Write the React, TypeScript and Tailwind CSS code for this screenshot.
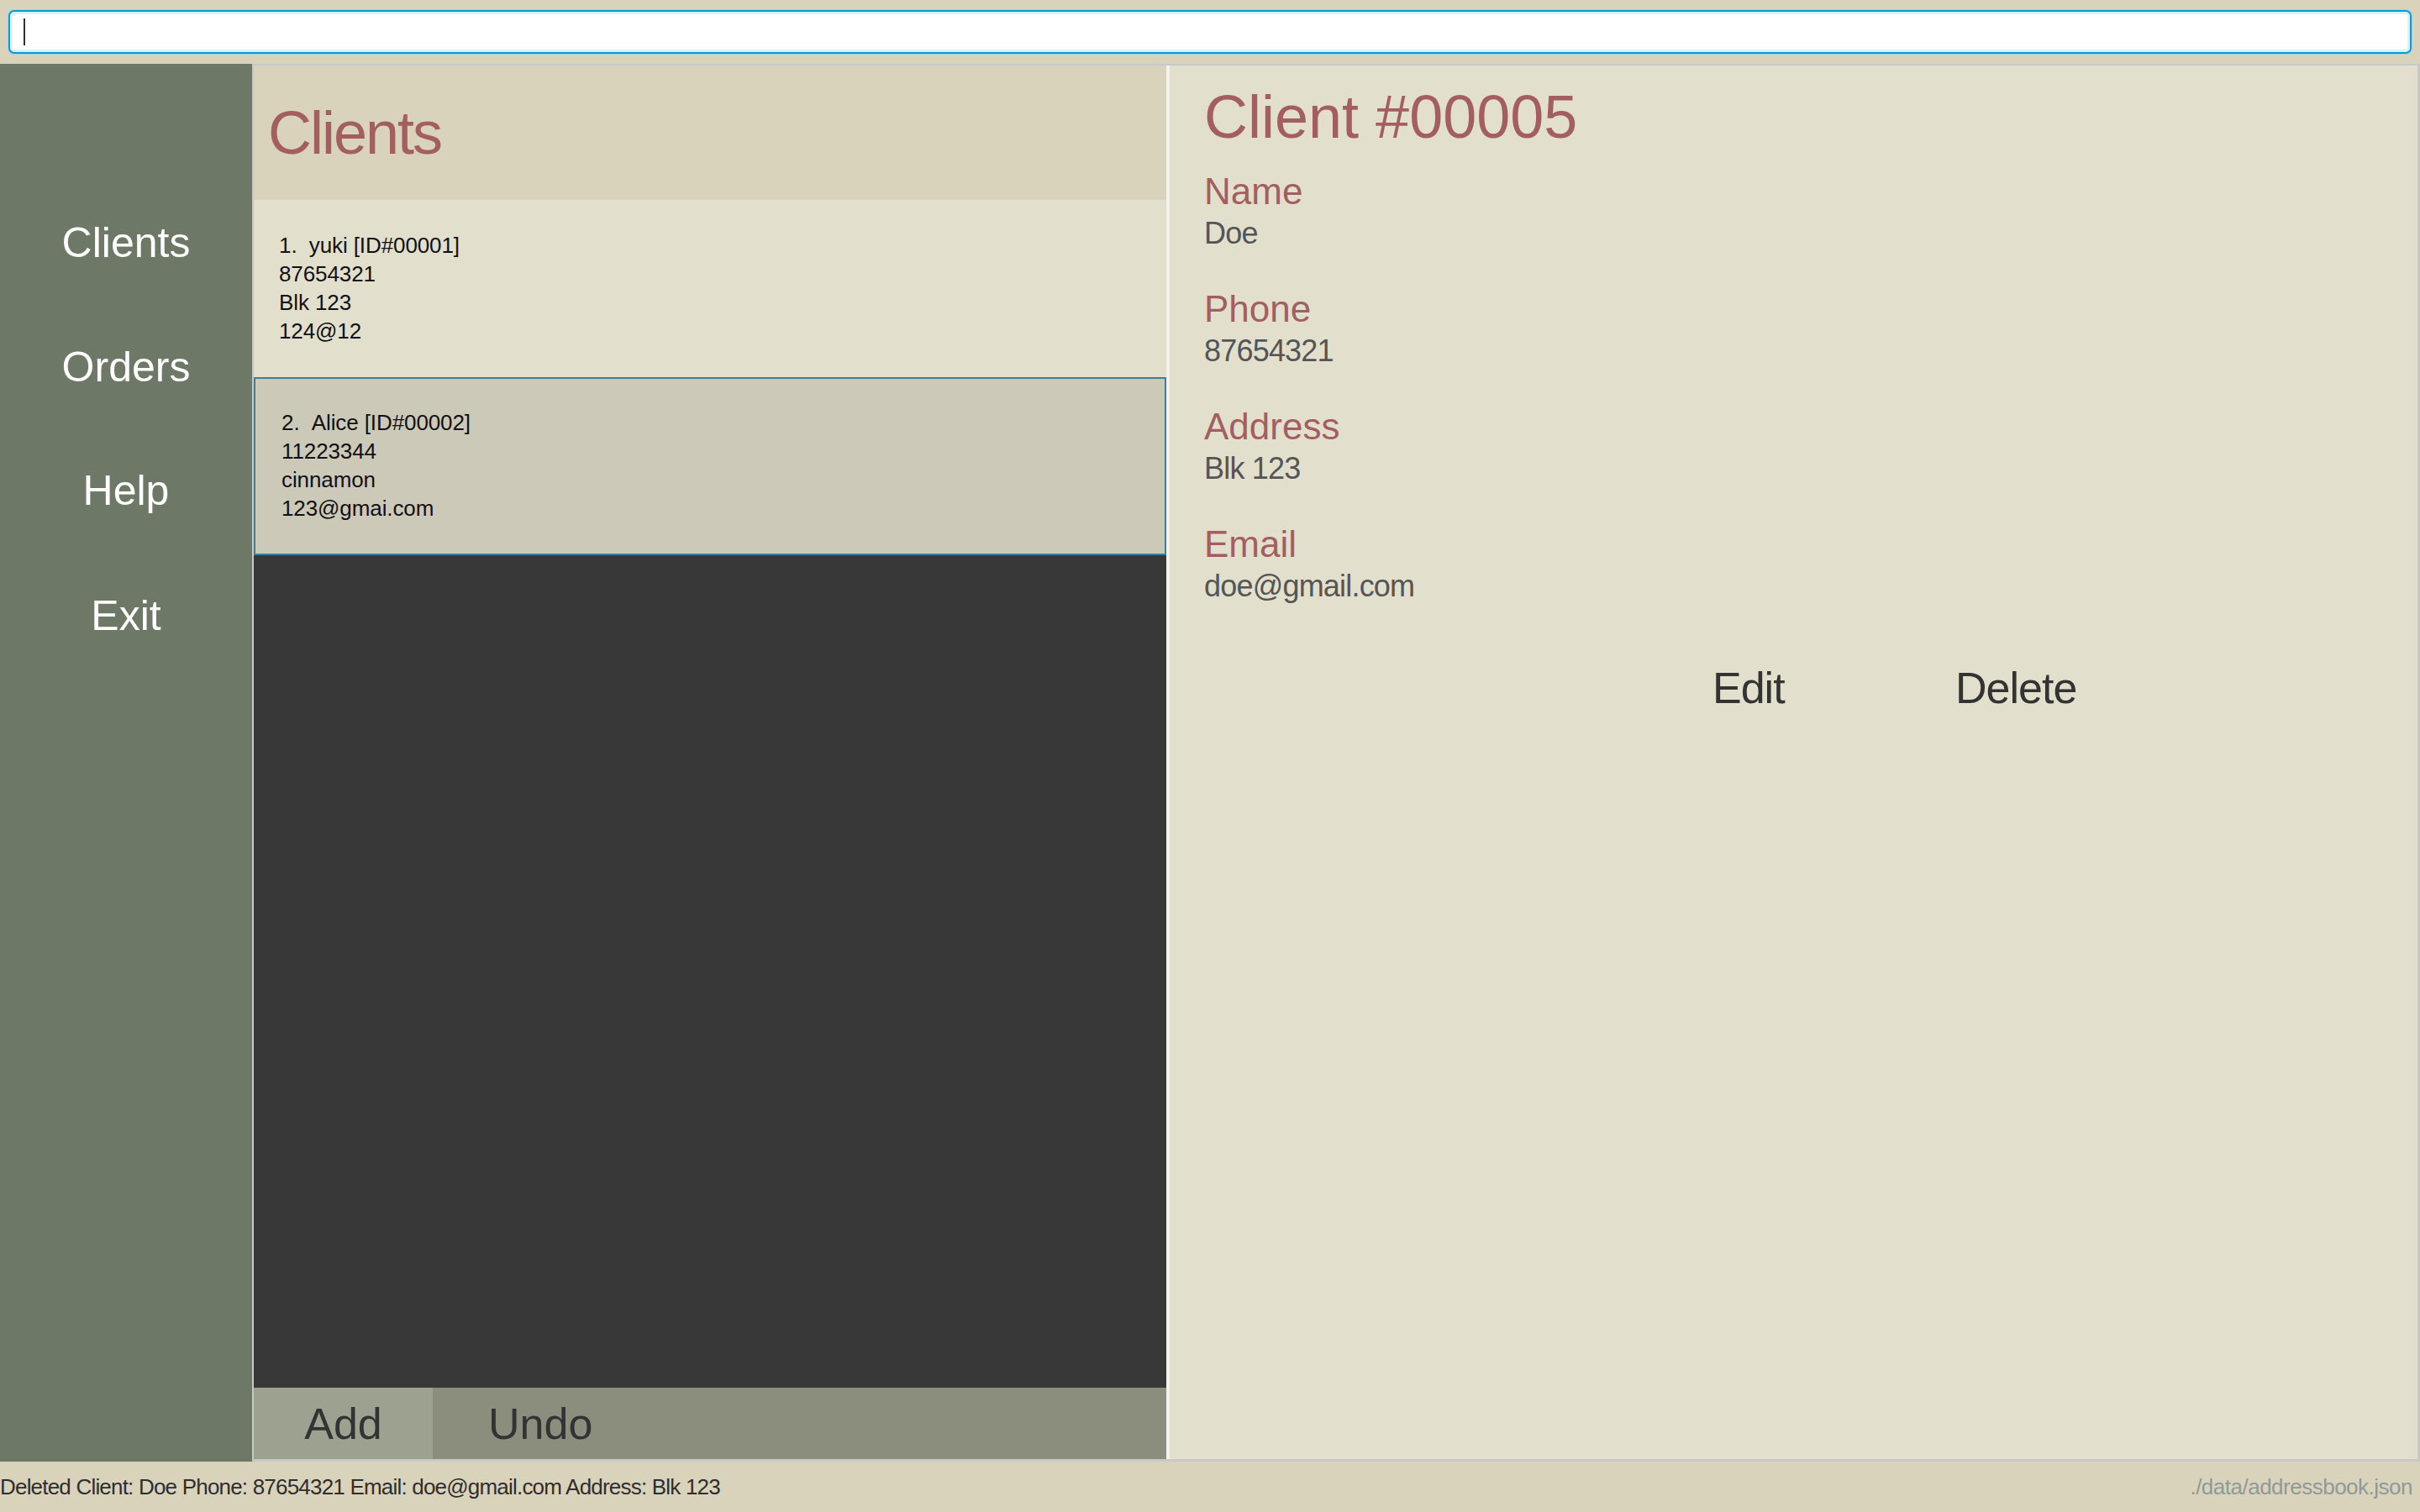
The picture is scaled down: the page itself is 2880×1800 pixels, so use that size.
import React from "react";

const font = { fontFamily: '"Liberation Sans", Arial, sans-serif' };

function ClientCard({
  index,
  name,
  id,
  phone,
  address,
  email,
  selected,
}: {
  index: number;
  name: string;
  id: string;
  phone: string;
  address: string;
  email: string;
  selected?: boolean;
}) {
  return (
    <div
      className={
        selected
          ? "h-[212px] shrink-0 border-2 border-[#3e7f96] bg-[#ccc9b9] pl-[31px] pt-[35px]"
          : "h-[211px] shrink-0 bg-[#e2dfcd] pl-[30px] pt-[37px]"
      }
    >
      <div className="text-[26px] leading-[34px] tracking-[-0.1px] text-[#111]">
        <div>
          {index}.&nbsp;&nbsp;{name} [ID#{id}]
        </div>
        <div>{phone}</div>
        <div>{address}</div>
        <div>{email}</div>
      </div>
    </div>
  );
}

function Field({ label, value, first }: { label: string; value: string; first?: boolean }) {
  return (
    <div className={first ? "mt-[31px]" : "mt-[50px]"}>
      <div className="text-[44px] leading-[44px] text-[#a35f5f]">{label}</div>
      <div className="mt-[10px] text-[36px] leading-[36px] tracking-[-0.8px] text-[#555555]">{value}</div>
    </div>
  );
}

export default function App() {
  return (
    <div className="flex h-[1800px] w-[2880px] flex-col overflow-hidden bg-[#dad3bb]" style={font}>
      {/* command box */}
      <div className="h-[76px] shrink-0 px-[10px] pt-[12px]">
        <div className="flex h-[52px] items-center rounded-[7px] border-2 border-[#0a9bd3] bg-white pl-[16px] shadow-[inset_0_0_0_3px_#dcf0f8,0_0_0_1px_#a9d3df]">
          <div className="h-[32px] w-[2px] bg-[#333]" />
        </div>
      </div>

      {/* main */}
      <div className="flex h-[1664px] shrink-0">
        {/* sidebar */}
        <div className="flex w-[300px] shrink-0 flex-col items-center bg-[#6d7866] pt-[188px] text-[50px] leading-[50px] text-white">
          <div>Clients</div>
          <div className="mt-[98px]">Orders</div>
          <div className="mt-[97px]">Help</div>
          <div className="mt-[99px]">Exit</div>
        </div>

        {/* content */}
        <div className="flex flex-1 border-b-[3px] border-l-2 border-r-[3px] border-t-2 border-[#c8c8c6]">
          {/* list column */}
          <div className="flex w-[1086px] shrink-0 flex-col">
            <div className="flex h-[160px] shrink-0 items-center bg-[#dad3bb] pl-[17px]">
              <span className="text-[72px] leading-[72px] tracking-[-2px] text-[#a35f5f]">Clients</span>
            </div>
            <ClientCard index={1} name="yuki" id="00001" phone="87654321" address="Blk 123" email="124@12" />
            <ClientCard
              index={2}
              name="Alice"
              id="00002"
              phone="11223344"
              address="cinnamon"
              email="123@gmai.com"
              selected
            />
            <div className="flex-1 bg-[#383838]" />
            <div className="flex h-[85px] shrink-0 items-center bg-[#8b8e7c] text-[52px] leading-[52px] text-[#333333]">
              <div className="flex h-full w-[213px] items-center justify-center bg-[#9da18f]">Add</div>
              <div className="flex h-full items-center pl-[66px]">Undo</div>
            </div>
          </div>

          <div className="w-[4px] shrink-0 bg-[#f2f2ee]" />

          {/* detail */}
          <div className="flex flex-1 flex-col bg-[#e2dfcd] pl-[41px] pt-[25px]">
            <div className="text-[72px] leading-[72px] text-[#a35f5f]">Client #00005</div>
            <Field first label="Name" value="Doe" />
            <Field label="Phone" value="87654321" />
            <Field label="Address" value="Blk 123" />
            <Field label="Email" value="doe@gmail.com" />
            <div className="mt-[77px] flex text-[52px] leading-[52px] tracking-[-1px] text-[#333333]">
              <div className="ml-[605px] w-[289px]">Edit</div>
              <div>Delete</div>
            </div>
          </div>
        </div>
      </div>

      {/* status bar */}
      <div className="flex h-[60px] shrink-0 items-center justify-between pr-[9px]">
        <span className="text-[26px] leading-[26px] tracking-[-0.8px] text-[#2e2e2e]">
          Deleted Client: Doe Phone: 87654321 Email: doe@gmail.com Address: Blk 123
        </span>
        <span className="text-[26px] leading-[26px] tracking-[-0.5px] text-[#8e9a98]">./data/addressbook.json</span>
      </div>
    </div>
  );
}
